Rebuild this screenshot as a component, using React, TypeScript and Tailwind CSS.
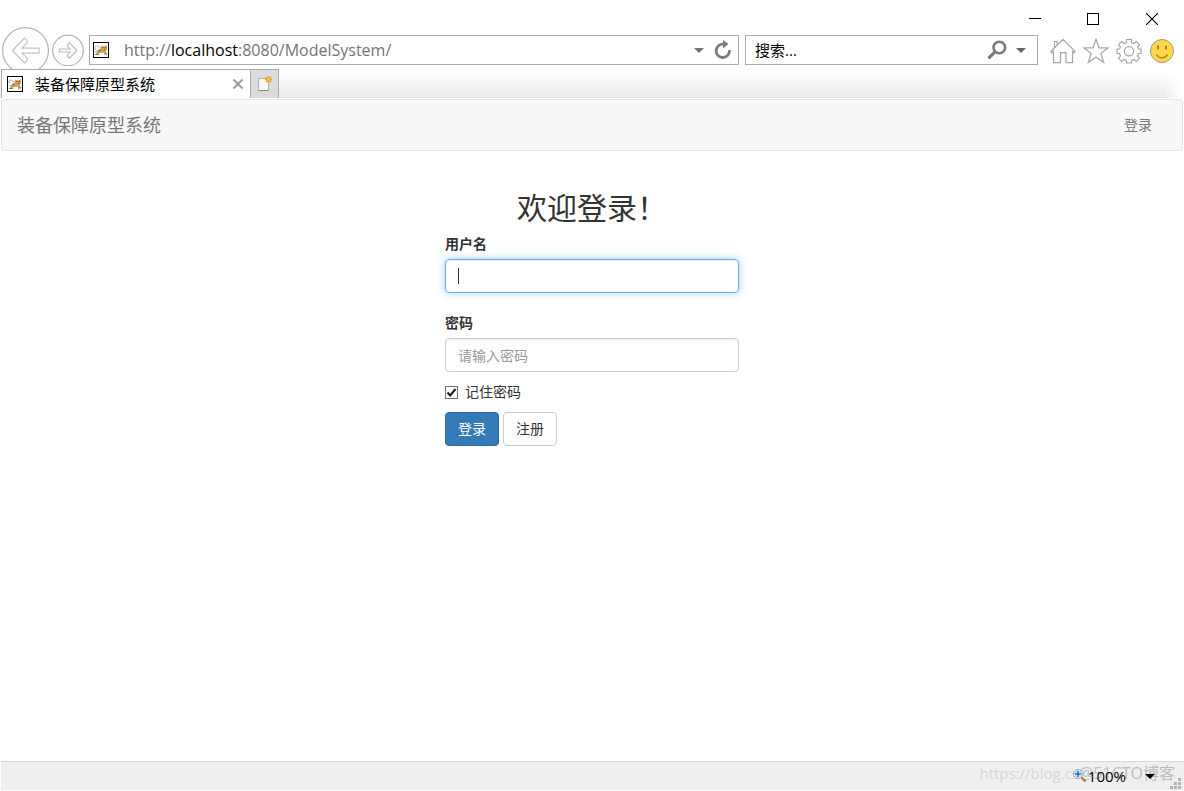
import { useState } from "react";

const stroke = { fill: "none", stroke: "#a6a6a6", strokeWidth: 1.2 };

function TomcatIcon() {
  return (
    <svg viewBox="0 0 16 16" className="size-4 shrink-0" aria-hidden="true">
      <rect x="0.5" y="0.5" width="15" height="15" fill="#fff" stroke="#000" />
      <path d="M3 8c-2-2-1-4 1-4s2 2 4 2M2 10.500l3-2" fill="none" stroke="#a9b0b8" />
      <path d="M8 3.500l1.500.8h2.500l2-1.300v4l-1 1.500v2l1.500 1.500-1.500.5-2.500-2-3.500.5-2 1.500H2.500L4 10l2-2.500 2-1z" fill="#cf9f55" />
      <path d="M5 8.500l2-1 1 1-2 1.500zM2 12h4v1H2zM11 11.500h3v1h-3z" fill="#907048" />
      <path d="M9.500 5.500h1M12 5.500h1M11 7.500h1" stroke="#705030" />
    </svg>
  );
}

function Caret({ className }: { className: string }) {
  return (
    <svg viewBox="0 0 10 5" className={`h-[5px] w-[10px] shrink-0 ${className}`} aria-hidden="true">
      <path d="M0 0h10L5 5z" fill="currentColor" />
    </svg>
  );
}

function WindowControls() {
  return (
    <div className="flex h-[27px] items-end justify-end pr-[2px]">
      <button aria-label="最小化" className="flex h-4 w-[58px] items-center justify-center">
        <svg viewBox="0 0 12 12" className="size-3"><path d="M0 5.5h12" stroke="#000" /></svg>
      </button>
      <button aria-label="最大化" className="flex h-4 w-[58px] items-center justify-center">
        <svg viewBox="0 0 12 12" className="size-3"><rect x="0.5" y="0.5" width="11" height="11" fill="none" stroke="#000" /></svg>
      </button>
      <button aria-label="关闭" className="flex h-4 w-[60px] items-center justify-center">
        <svg viewBox="0 0 12 12" className="size-3"><path d="M0 0l12 12M12 0L0 12" stroke="#000" strokeWidth="1.1" /></svg>
      </button>
    </div>
  );
}

function Toolbar() {
  return (
    <div className="flex h-[42px] items-start overflow-hidden pr-[9px] pl-[2px]">
      <button aria-label="后退" className="mr-[3px] shrink-0">
        <svg viewBox="0 0 47 47" className="size-[47px]">
          <circle cx="23.5" cy="23.5" r="22.9" {...stroke} stroke="#b4b4b4" />
          <path d="M10.500 23.500L22.500 11l2.600 2.600v2.400l-5 5.200h17v5H20.100l5 5v2.500L22.500 36z" {...stroke} stroke="#c2c2c2" />
        </svg>
      </button>
      <button aria-label="前进" className="mt-[7px] mr-[5px] shrink-0">
        <svg viewBox="0 0 32 32" className="size-8">
          <circle cx="16" cy="16.500" r="15.300" {...stroke} stroke="#b4b4b4" />
          <path d="M25 16.500L17.500 8.800l-2 2v1.700l2.700 2.500H7.500v3h10.700l-2.700 2.700v1.700l2 1.800z" {...stroke} stroke="#bcbcbc" />
        </svg>
      </button>

      {/* Address bar */}
      <div className="mt-2 mr-[6px] flex h-[30px] min-w-0 flex-1 items-center border border-[#ababab] bg-white pr-[6px] pl-[3px]">
        <TomcatIcon />
        <div
          role="textbox"
          aria-label="地址"
          contentEditable
          suppressContentEditableWarning
          spellCheck={false}
          className="ml-[15px] min-w-0 flex-1 overflow-hidden text-base leading-6 whitespace-nowrap text-[#757575] outline-none"
        >
          http://<span className="text-black">localhost</span>:8080/ModelSystem/
        </div>
        <button aria-label="显示地址" className="mr-[10px]">
          <Caret className="text-[#757575]" />
        </button>
        <button aria-label="刷新">
          <svg viewBox="0 0 18 20" className="h-5 w-[18px]">
            <path d="M10 4.200A6.700 6.700 0 1 0 15.500 10" fill="none" stroke="#7a7a7a" strokeWidth="2.800" />
            <path d="M9 0v8.500L14.500 4z" fill="#7a7a7a" />
          </svg>
        </button>
      </div>

      {/* Search box */}
      <div className="mt-2 mr-3 flex h-[30px] w-[293px] items-center border border-[#ababab] bg-white pr-[11px] pl-[9px]">
        <input
          aria-label="搜索"
          placeholder="搜索..."
          className="min-w-0 flex-1 text-[15px] leading-5 outline-none placeholder:text-black"
        />
        <button aria-label="开始搜索" className="mr-[9px]">
          <svg viewBox="0 0 20 20" className="size-5">
            <circle cx="12.300" cy="7.500" r="5.800" fill="none" stroke="#7a7a7a" strokeWidth="2.600" />
            <path d="M8 11.800L1.500 18.300" stroke="#7a7a7a" strokeWidth="3.200" />
          </svg>
        </button>
        <button aria-label="搜索选项">
          <Caret className="text-[#666]" />
        </button>
      </div>

      <div className="mt-[11px] flex shrink-0 gap-[7px]">
        <button aria-label="主页">
          <svg viewBox="0 0 26 26" className="size-[26px]">
            <path d="M.8 13.500L13 1.300l4.500 4.500 1.500 1.500 6.200 6.200-1.200 1.300-1.500-1.300v11.200h-6.500v-10h-5.500v10H3.500V13.500L2 14.800zM4.500 9.500v-6h2.700v3.200" {...stroke} />
          </svg>
        </button>
        <button aria-label="收藏夹">
          <svg viewBox="0 0 26 26" className="size-[26px]">
            <path d="M13 1.200l3 8.600h9.200l-7.400 5.600 2.900 9.100L13 19l-7.700 5.500 2.900-9.100L.8 9.800H10z" {...stroke} />
          </svg>
        </button>
        <button aria-label="工具">
          <svg viewBox="0 0 26 26" className="size-[26px]">
            <path d="M10.500 1.500h5v3l2.500 1 2.300-2 3.200 3.200-2 2.300 1 2h2.500v4.500h-2.500l-1 2.500 2 2.300-3.200 3.200-2.300-2-2.500 1v2.500h-5v-2.500l-2.500-1-2.300 2-3.200-3.200 2-2.300-1-2.500H1v-4.500h2.500l1-2-2-2.300 3.200-3.200 2.300 2 2.500-1z" {...stroke} />
            <circle cx="13" cy="13.300" r="4.600" {...stroke} />
          </svg>
        </button>
        <button aria-label="发送微笑">
          <svg viewBox="0 0 26 26" className="size-[26px]">
            <circle cx="13" cy="13" r="11.500" fill="#ffd84b" stroke="#a09a88" />
            <path d="M9 7.500v4M17 7.500v4" stroke="#a8862c" strokeWidth="2" />
            <path d="M7.500 16.500c2.500 4.500 8.500 4.500 11 0" fill="none" stroke="#a8862c" strokeWidth="1.500" />
          </svg>
        </button>
      </div>
    </div>
  );
}

function TabStrip() {
  return (
    <div className="mb-px flex h-[29px] bg-[linear-gradient(to_left,white_4px,transparent_20px),linear-gradient(to_bottom,white_2px,#ebebeb)] pl-px">
      <div className="flex w-[249px] items-center border-t border-l border-[#ababab] bg-white pr-[6px] pl-[5px]">
        <TomcatIcon />
        <span className="ml-3 flex-1 text-[15px] leading-5 text-black">装备保障原型系统</span>
        <button aria-label="关闭标签页">
          <svg viewBox="0 0 12 12" className="size-3"><path d="M1.500 1.500l9 9M10.500 1.500l-9 9" stroke="#a0a0a0" strokeWidth="2.200" /></svg>
        </button>
      </div>
      <button aria-label="新建标签页" className="flex w-[29px] items-center justify-center border border-b-0 border-[#ababab] bg-[#dcdcdc]">
        <svg viewBox="0 0 16 16" className="size-4">
          <path d="M1.500 2.500h10v12h-10z" fill="#f8f8f8" stroke="#b0b0b0" />
          <path d="M1.500 14.500h10" stroke="#858585" />
          <path d="M11.500 0v7M8 3.500h7M9 1l5 5M14 1L9 6" stroke="#f0a020" strokeWidth="1.300" />
          <circle cx="11.500" cy="3.500" r="1.300" fill="#ffd060" />
        </svg>
      </button>
    </div>
  );
}

function LoginForm() {
  const [remember, setRemember] = useState(true);

  return (
    <form className="mx-auto mt-10 w-[294px] text-sm leading-5 text-[#333]" onSubmit={(e) => e.preventDefault()}>
      <h2 className="mb-[10px] text-center text-3xl leading-[33px]">欢迎登录！</h2>

      <label htmlFor="username" className="mb-[5px] block font-bold">用户名</label>
      <div className="relative mb-5">
        <input
          id="username"
          className="block h-[34px] w-full rounded border border-[#66afe9] px-3 caret-transparent shadow-[inset_0_1px_1px_rgba(0,0,0,0.075),0_0_8px_rgba(102,175,233,0.6)] outline-none"
        />
        <span className="pointer-events-none absolute top-[9px] left-[13px] h-4 w-px bg-[#333]" />
      </div>

      <label htmlFor="password" className="mb-[5px] block font-bold">密码</label>
      <input
        id="password"
        type="password"
        placeholder="请输入密码"
        className="block h-[34px] w-full rounded border border-[#ccc] px-3 shadow-[inset_0_1px_1px_rgba(0,0,0,0.075)] outline-none placeholder:text-[#999]"
      />

      <label className="my-[10px] flex items-center">
        <span className="relative mr-[7px] size-[13px]">
          <input
            type="checkbox"
            checked={remember}
            onChange={(e) => setRemember(e.target.checked)}
            className="block size-[13px] appearance-none border border-[#707070] bg-white"
          />
          {remember && (
            <svg viewBox="0 0 13 13" className="pointer-events-none absolute inset-0 size-[13px]">
              <path d="M2.500 6.500l2.700 3L10.500 3" fill="none" stroke="#1a1a1a" strokeWidth="2" />
            </svg>
          )}
        </span>
        记住密码
      </label>

      <div className="flex gap-1">
        <button type="submit" className="h-[34px] rounded border border-[#2e6da4] bg-[#337ab7] px-3 text-white">登录</button>
        <button type="button" className="h-[34px] rounded border border-[#ccc] bg-white px-3">注册</button>
      </div>
    </form>
  );
}

function StatusBar() {
  return (
    <footer className="relative mb-px ml-px flex h-[29px] items-center justify-end border-t border-[#d7d7d7] bg-[#efefef] pr-[2px]">
      <div className="pointer-events-none absolute top-0 right-[9px] flex items-center leading-[22px] whitespace-nowrap">
        <span className="text-[15px] text-[#d6d6d6]">https://blog.cs</span>
        <span className="text-base leading-[22px] text-[#bdbdbd]">@51CTO博客</span>
      </div>
      <button className="relative flex items-center text-[15px] leading-5 text-black">
        <svg viewBox="0 0 16 16" className="size-4">
          <circle cx="6" cy="6" r="4.500" fill="#d8e8f8" stroke="#8fa8c0" />
          <path d="M6 3v6M3 6h6" stroke="#2468c0" strokeWidth="1.500" />
          <path d="M9.500 9.500l4 4" stroke="#a07050" strokeWidth="2" />
        </svg>
        100%
        <Caret className="ml-[19px] text-black" />
      </button>
      <svg viewBox="0 0 12 12" className="ml-[15px] size-3 self-end" aria-hidden="true">
        <path d="M8 0h3v3H8zM4 4h3v3H4zM8 4h3v3H8zM0 8h3v3H0zM4 8h3v3H4zM8 8h3v3H8z" fill="#b4b4b4" />
      </svg>
    </footer>
  );
}

export default function App() {
  return (
    <div className="flex min-h-screen flex-col bg-white font-['Open_Sans','Noto_Sans_CJK_SC',sans-serif]">
      <header>
        <WindowControls />
        <Toolbar />
        <TabStrip />
      </header>

      <main className="flex-1 px-px">
        <nav className="flex h-[52px] items-center justify-between rounded border border-[#e7e7e7] bg-[#f8f8f8] pr-[30px] pl-[15px] text-[#777]">
          <a href="#" className="text-lg leading-5">装备保障原型系统</a>
          <a href="#login" className="text-sm leading-5">登录</a>
        </nav>
        <LoginForm />
      </main>

      <StatusBar />
    </div>
  );
}
